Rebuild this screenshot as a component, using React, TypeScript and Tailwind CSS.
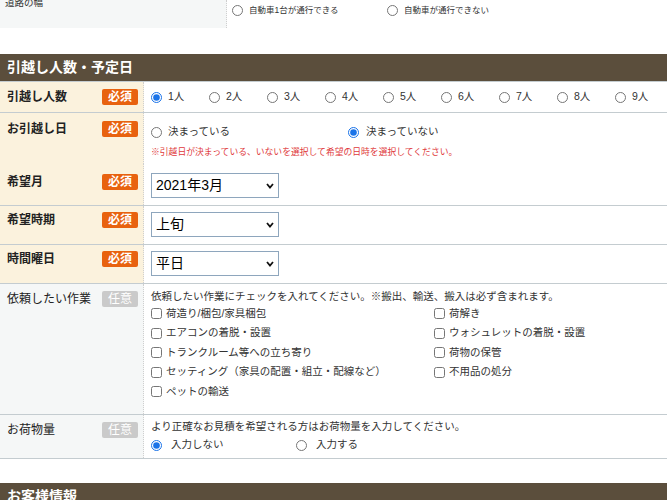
import React from 'react';

const FONT = "font-['Liberation_Sans','Noto_Sans_CJK_JP',sans-serif]";

const Badge: React.FC<{ required?: boolean }> = ({ required }) => (
  <span
    className={
      required
        ? 'w-[36px] h-[16px] shrink-0 flex items-center justify-center rounded-[2px] bg-[#e8620f] text-white text-[12px] font-bold leading-none'
        : 'w-[36px] h-[16px] shrink-0 flex items-center justify-center rounded-[2px] bg-[#cacaca] text-white text-[12px] leading-none'
    }
  >
    {required ? '必須' : '任意'}
  </span>
);

const Radio: React.FC<{ checked?: boolean; name: string }> = ({ checked, name }) => (
  <input
    type="radio"
    name={name}
    defaultChecked={checked}
    className="m-0 w-[11px] h-[11px] shrink-0 accent-[#1a73e8]"
  />
);

const Check: React.FC<{ label: string }> = ({ label }) => (
  <label className="h-[19.5px] flex items-center gap-[4px] text-[10.5px] text-[#333]">
    <input type="checkbox" className="m-0 w-[11px] h-[11px] shrink-0" />
    <span>{label}</span>
  </label>
);

const Select: React.FC<{ value: string; options: string[] }> = ({ value, options }) => (
  <div className="relative w-[128px] h-[25px]">
    <select
      defaultValue={value}
      className="appearance-none w-full h-full bg-white border border-[#8ea6bd] pl-[4px] text-[14px] text-black outline-none"
    >
      {options.map((o) => (
        <option key={o}>{o}</option>
      ))}
    </select>
    <svg className="absolute right-[5px] top-[10px] pointer-events-none" width="8" height="6" viewBox="0 0 8 6">
      <polyline points="1,1 4,4.5 7,1" fill="none" stroke="#111" strokeWidth="1.8" />
    </svg>
  </div>
);

type RowProps = {
  label: string;
  required?: boolean;
  height: string;
  labelPad: string;
  noBorder?: boolean;
  children: React.ReactNode;
};

const Row: React.FC<RowProps> = ({ label, required, height, labelPad, noBorder, children }) => (
  <div className={`flex ${height} ${noBorder ? '' : 'border-b border-[#c4ccd0]'}`}>
    <div
      className={`w-[144px] shrink-0 flex items-start justify-between pl-[7px] pr-[5px] border-r border-dotted border-[#cfcfcf] ${labelPad} ${
        required ? 'bg-[#fbf2dd]' : 'bg-[#f5f7f7]'
      }`}
    >
      <span className={`h-[16px] flex items-center text-[12px] text-[#222] ${required ? 'font-bold' : ''}`}>{label}</span>
      <Badge required={required} />
    </div>
    <div className="flex-1 pl-[7px]">{children}</div>
  </div>
);

const Header: React.FC<{ title: string }> = ({ title }) => (
  <div className="h-[28px] bg-[#5b4e3c] border-b border-[#c4ccd0] flex items-center pl-[7px]">
    <h2 className="text-[14px] font-bold text-white">{title}</h2>
  </div>
);

export default function App() {
  const people = ['1人', '2人', '3人', '4人', '5人', '6人', '7人', '8人', '9人'];

  return (
    <div className={`w-[667px] min-h-[500px] bg-white ${FONT}`}>
      {/* tail of the previous section, scrolled partly out of view */}
      <div className="flex h-[28px] overflow-hidden">
        <div className="w-[227px] shrink-0 bg-[#f5f7f7] border-r border-dotted border-[#cfcfcf] pl-[5px]">
          <span className="block -mt-[3px] text-[9.5px] leading-[12px] text-[#333]">道路の幅</span>
        </div>
        <div className="flex items-start pt-[4px] pl-[5px] text-[8.5px] text-[#333]">
          <label className="w-[155px] flex items-center gap-[6px]">
            <Radio name="road" />
            <span>自動車1台が通行できる</span>
          </label>
          <label className="flex items-center gap-[6px]">
            <Radio name="road" />
            <span>自動車が通行できない</span>
          </label>
        </div>
      </div>

      <div className="h-[26px]" />

      <Header title="引越し人数・予定日" />

      <Row label="引越し人数" required height="h-[31px]" labelPad="pt-[7px]">
        <div className="h-full flex items-center">
          {people.map((p, i) => (
            <label key={p} className="w-[58px] flex items-center gap-[6px] text-[10.5px] text-[#333]">
              <Radio name="people" checked={i === 0} />
              <span>{p}</span>
            </label>
          ))}
        </div>
      </Row>

      <Row label="お引越し日" required height="h-[51px]" labelPad="pt-[8px]" noBorder>
        <div className="pt-[12px]">
          <div className="h-[14px] flex items-center text-[10.5px] text-[#333]">
            <label className="w-[197px] flex items-center gap-[6px]">
              <Radio name="fixed" />
              <span>決まっている</span>
            </label>
            <label className="flex items-center gap-[7px]">
              <Radio name="fixed" checked />
              <span>決まっていない</span>
            </label>
          </div>
          <p className="mt-[7px] text-[8.8px] leading-[12px] text-[#e0393b]">
            ※引越日が決まっている、いないを選択して希望の日時を選択してください。
          </p>
        </div>
      </Row>

      <Row label="希望月" required height="h-[42px]" labelPad="pt-[10px]">
        <div className="pt-[9px]">
          <Select value="2021年3月" options={['2021年3月', '2021年4月', '2021年5月']} />
        </div>
      </Row>

      <Row label="希望時期" required height="h-[39px]" labelPad="pt-[6px]">
        <div className="pt-[6px]">
          <Select value="上旬" options={['上旬', '中旬', '下旬']} />
        </div>
      </Row>

      <Row label="時間曜日" required height="h-[39px]" labelPad="pt-[6px]">
        <div className="pt-[6px]">
          <Select value="平日" options={['平日', '土日祝']} />
        </div>
      </Row>

      <Row label="依頼したい作業" height="h-[131px]" labelPad="pt-[7px]">
        <div className="pt-[5px]">
          <p className="h-[14px] leading-[14px] text-[10.5px] text-[#333]">
            依頼したい作業にチェックを入れてください。※搬出、輸送、搬入は必ず含まれます。
          </p>
          <div className="mt-[1px] grid grid-cols-[283px_1fr]">
            <div>
              <Check label="荷造り/梱包/家具梱包" />
              <Check label="エアコンの着脱・設置" />
              <Check label="トランクルーム等への立ち寄り" />
              <Check label="セッティング（家具の配置・組立・配線など）" />
              <Check label="ペットの輸送" />
            </div>
            <div>
              <Check label="荷解き" />
              <Check label="ウォシュレットの着脱・設置" />
              <Check label="荷物の保管" />
              <Check label="不用品の処分" />
            </div>
          </div>
        </div>
      </Row>

      <Row label="お荷物量" height="h-[44px]" labelPad="pt-[7px]">
        <div className="pt-[4px]">
          <p className="h-[14px] leading-[14px] text-[10.5px] text-[#333]">
            より正確なお見積を希望される方はお荷物量を入力してください。
          </p>
          <div className="mt-[5px] h-[14px] flex items-center text-[10.5px] text-[#333]">
            <label className="w-[145px] flex items-center gap-[9px]">
              <Radio name="amount" checked />
              <span>入力しない</span>
            </label>
            <label className="flex items-center gap-[9px]">
              <Radio name="amount" />
              <span>入力する</span>
            </label>
          </div>
        </div>
      </Row>

      <div className="h-[24px]" />

      <Header title="お客様情報" />
      <div className="h-[40px]" />
    </div>
  );
}
